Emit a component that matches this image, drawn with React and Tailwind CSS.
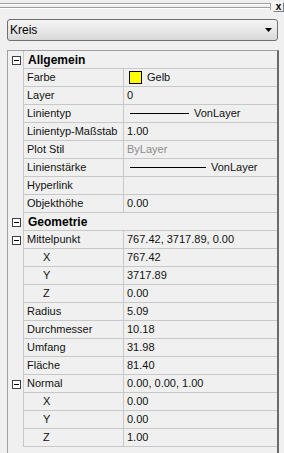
import React from 'react';

const rows = [
  { type: 'group', label: 'Allgemein' },
  { label: 'Farbe', value: 'Gelb', kind: 'color' },
  { label: 'Layer', value: '0' },
  { label: 'Linientyp', value: 'VonLayer', kind: 'line', lineW: 'w-[59px]' },
  { label: 'Linientyp-Maßstab', value: '1.00' },
  { label: 'Plot Stil', value: 'ByLayer', kind: 'muted' },
  { label: 'Linienstärke', value: 'VonLayer', kind: 'line', lineW: 'w-[76px]' },
  { label: 'Hyperlink', value: '' },
  { label: 'Objekthöhe', value: '0.00' },
  { type: 'group', label: 'Geometrie' },
  { label: 'Mittelpunkt', value: '767.42, 3717.89, 0.00', expand: true },
  { label: 'X', value: '767.42', sub: true },
  { label: 'Y', value: '3717.89', sub: true },
  { label: 'Z', value: '0.00', sub: true },
  { label: 'Radius', value: '5.09' },
  { label: 'Durchmesser', value: '10.18' },
  { label: 'Umfang', value: '31.98' },
  { label: 'Fläche', value: '81.40' },
  { label: 'Normal', value: '0.00, 0.00, 1.00', expand: true },
  { label: 'X', value: '0.00', sub: true },
  { label: 'Y', value: '0.00', sub: true },
  { label: 'Z', value: '1.00', sub: true },
];

const Minus = () => (
  <div className="w-[9px] h-[9px] border border-[#404040] bg-white flex items-center justify-center">
    <div className="w-[5px] h-px bg-black" />
  </div>
);

const Value = ({ row }) => {
  if (row.kind === 'color') {
    return (
      <div className="flex items-center">
        <div className="ml-[2px] w-[13px] h-[13px] bg-[#ffff00] border border-black" />
        <span className="ml-[5px]">{row.value}</span>
      </div>
    );
  }
  if (row.kind === 'line') {
    return (
      <div className="flex items-center">
        <div className={`ml-[3px] h-px bg-black ${row.lineW}`} />
        <span className="ml-[5px]">{row.value}</span>
      </div>
    );
  }
  if (row.kind === 'muted') {
    return <span className="text-[#8c8c8c]">{row.value}</span>;
  }
  return <span>{row.value}</span>;
};

const Row = ({ row }) => {
  if (row.type === 'group') {
    return (
      <div className="flex h-[18px]">
        <div className="w-[15px] flex items-center justify-center pl-[2px]">
          <Minus />
        </div>
        <div className="flex-1 flex items-center border-l border-b border-[#c8c8c8] pl-[4px] font-bold text-[12px] text-black">
          {row.label}
        </div>
      </div>
    );
  }
  return (
    <div className="flex h-[18px]">
      <div className="w-[15px] flex items-center justify-center pl-[2px]">
        {row.expand && <Minus />}
      </div>
      <div
        className={`w-[100px] flex items-center border-l border-b border-[#c8c8c8] ${
          row.sub ? 'pl-[19px]' : 'pl-[3px]'
        }`}
      >
        {row.label}
      </div>
      <div className="flex-1 flex items-center border-l border-b border-[#c8c8c8] pl-[3px] whitespace-nowrap">
        <Value row={row} />
      </div>
    </div>
  );
};

export default function App() {
  return (
    <div
      className="w-[284px] h-[453px] bg-[#f0f0f0] overflow-hidden text-[11px] text-[#111]"
      style={{ fontFamily: '"Liberation Sans", Arial, sans-serif' }}
    >
      {/* title grip + close */}
      <div className="flex h-[14px]">
        <div className="w-[271px] flex">
          <div className="flex-1 pt-[3px]">
            <div className="h-px bg-[#a0a0a0]" />
            <div className="h-px bg-white" />
            <div className="h-[2px]" />
            <div className="h-px bg-[#a0a0a0]" />
            <div className="h-px bg-white" />
          </div>
          <div className="w-px h-[7px] mt-[3px] bg-[#a0a0a0]" />
        </div>
        <div className="ml-[2px] mt-[2px] w-[11px] h-[10px] border border-t-white border-l-white border-r-[#808080] border-b-[#808080] flex items-center justify-center text-[10px] font-bold leading-none text-black">
          x
        </div>
      </div>

      {/* object selector */}
      <div className="mt-[5px] ml-[7px] w-[271px] h-[22px] rounded-[3px] border border-[#707070] bg-gradient-to-b from-[#f4f4f4] via-[#e8e8e8] to-[#d8d8d8] flex items-center pl-[2px] pr-[5px]">
        <span className="flex-1 text-[12px] text-black">Kreis</span>
        <svg width="7" height="4" viewBox="0 0 7 4">
          <path d="M0 0 H7 L3.5 4 Z" fill="#000" />
        </svg>
      </div>

      {/* property grid */}
      <div className="mt-[9px] ml-[7px] w-[272px] h-[420px] border-l border-t border-[#a0a0a0] border-r-2 border-r-[#6a6a6a]">
        {rows.map((row, i) => (
          <Row key={i} row={row} />
        ))}
      </div>
    </div>
  );
}
